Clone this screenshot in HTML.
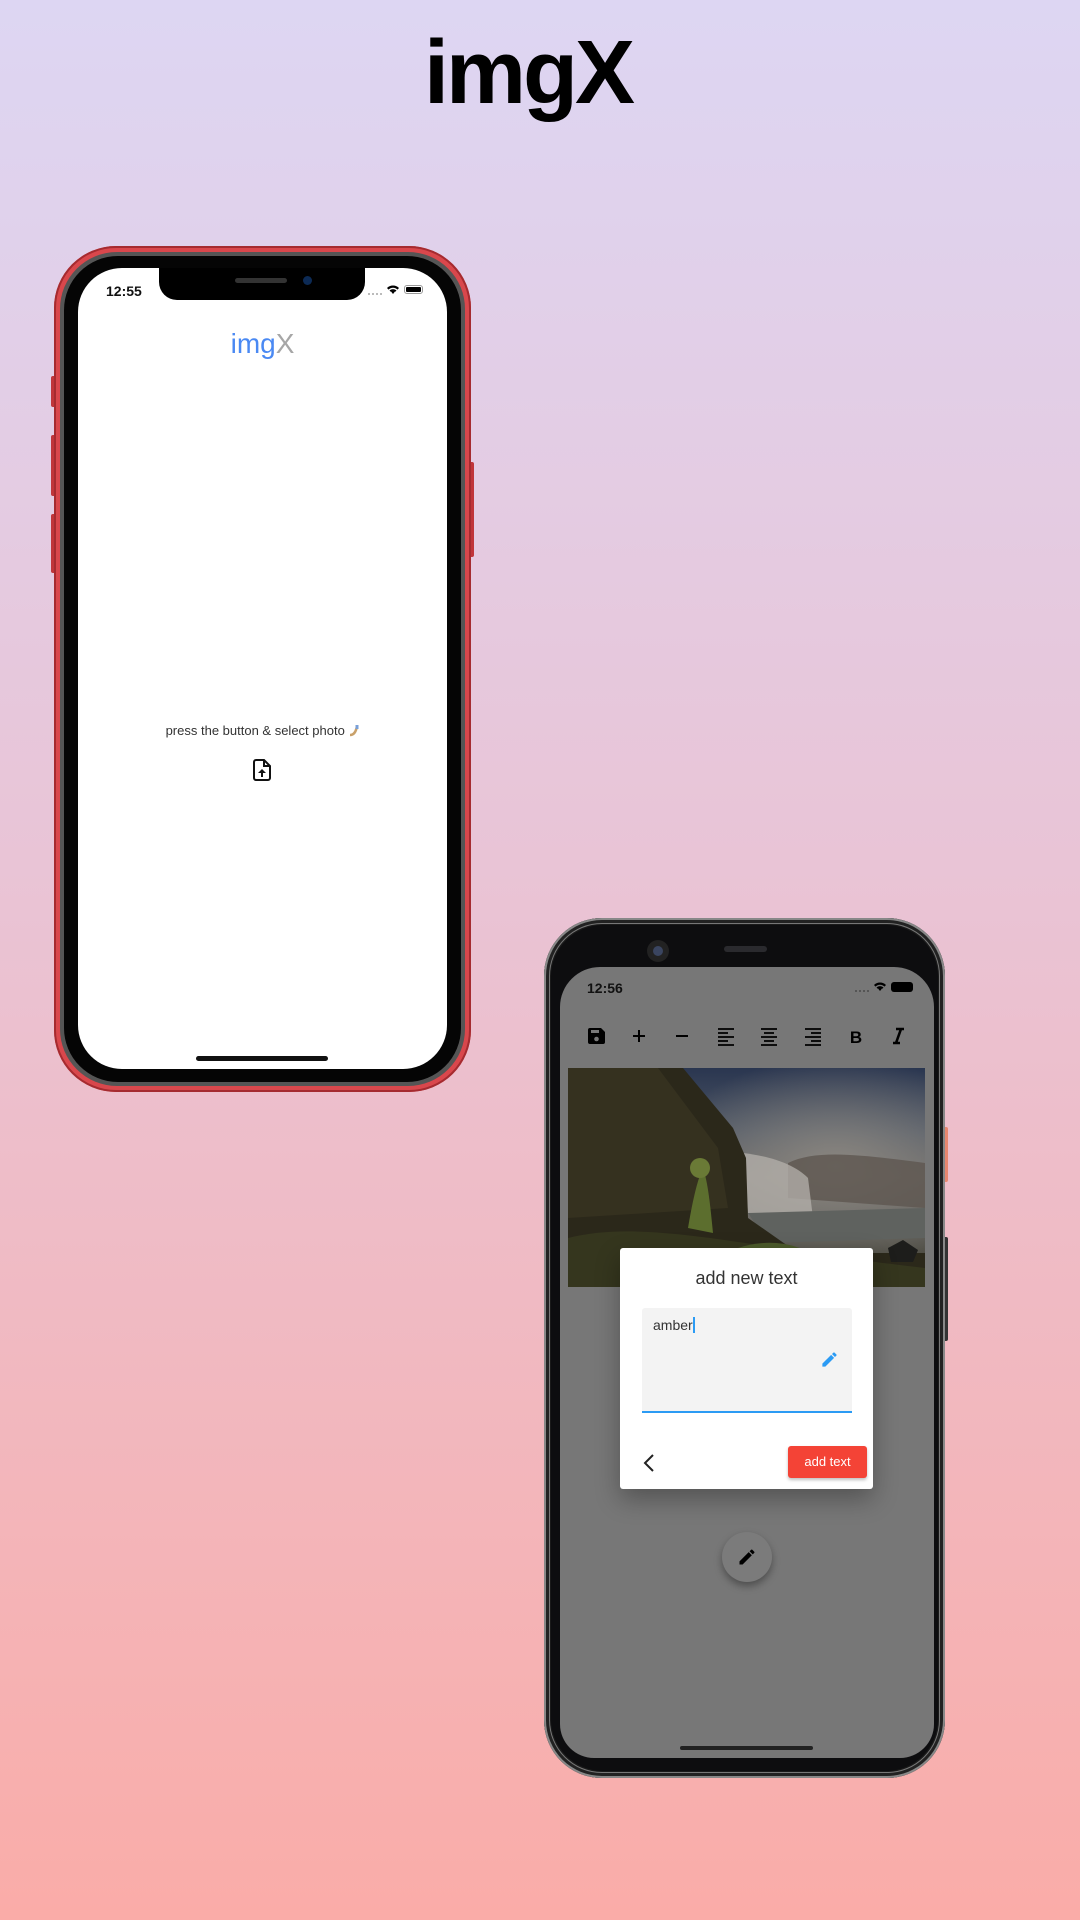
<!DOCTYPE html>
<html><head><meta charset="utf-8">
<style>
*{margin:0;padding:0;box-sizing:border-box}
body{width:1080px;height:1920px;overflow:hidden;background:linear-gradient(180deg,#ddd6f3 0%,#e9c4d6 45%,#faaca8 100%);font-family:"Liberation Sans","DejaVu Sans",sans-serif;position:relative}
.abs{position:absolute}
</style></head><body>
<div class="abs" style="left:-12px;width:1080px;top:22px;text-align:center;font-size:90px;font-weight:bold;letter-spacing:-3px;color:#000">imgX</div>

<!-- iPhone -->
<div class="abs" style="left:51px;top:376px;width:6px;height:31px;background:#c0353a;border-radius:2px"></div>
<div class="abs" style="left:51px;top:435px;width:6px;height:61px;background:#c0353a;border-radius:2px"></div>
<div class="abs" style="left:51px;top:514px;width:6px;height:59px;background:#c0353a;border-radius:2px"></div>
<div class="abs" style="left:468px;top:462px;width:6px;height:95px;background:#c0353a;border-radius:2px"></div>
<div class="abs" style="left:54px;top:246px;width:417px;height:846px;border-radius:62px;background:#d9474c;box-shadow:inset 0 0 0 2px #a52b30"></div>
<div class="abs" style="left:60px;top:252px;width:405px;height:834px;border-radius:57px;background:#555;"></div>
<div class="abs" style="left:64px;top:256px;width:397px;height:826px;border-radius:54px;background:#050505;"></div>
<div class="abs" style="left:78px;top:268px;width:369px;height:801px;border-radius:44px;background:#fff;overflow:hidden">
  <div class="abs" style="left:81px;top:-2px;width:206px;height:34px;background:#000;border-radius:0 0 18px 18px"></div>
  <div class="abs" style="left:157px;top:10px;width:52px;height:5px;background:#333;border-radius:3px"></div>
  <div class="abs" style="left:225px;top:8px;width:9px;height:9px;background:#0c2a55;border-radius:50%"></div>
  <div class="abs" style="left:28px;top:15px;font-size:14px;font-weight:bold;color:#111">12:55</div>
  <div class="abs" style="left:290px;top:25px;width:14px;height:2px;border-top:2px dotted #bbb"></div>
  <svg class="abs" style="left:308px;top:16px" width="14" height="11" viewBox="0 0 14 11"><path d="M7 10 L9 7.5 A3 3 0 0 0 5 7.5Z M1 4 A8.5 8.5 0 0 1 13 4 L11.5 5.6 A6.3 6.3 0 0 0 2.5 5.6Z M3.5 6.5 A5 5 0 0 1 10.5 6.5 L9.3 7.7 A3.3 3.3 0 0 0 4.7 7.7Z" fill="#000"/></svg>
  <div class="abs" style="left:326px;top:17px;width:19px;height:9px;border:1px solid #999;border-radius:3px;padding:1px"><div style="width:100%;height:100%;background:#000;border-radius:1px"></div></div>
  <div class="abs" style="left:0;width:369px;top:60px;text-align:center;font-size:28px;color:#4a89f3">img<span style="color:#a6a6a6">X</span></div>
  <div class="abs" style="left:0;width:369px;top:455px;text-align:center;font-size:13px;color:#333">press the button &amp; select photo <svg width="11" height="13" viewBox="0 0 11 13" style="vertical-align:-2px"><path d="M2 11 C6 11 8 8 9 2" stroke="#c9a16a" stroke-width="2.5" fill="none"/><rect x="7.5" y="1" width="3" height="4" fill="#7aa0d8"/></svg></div>
  <svg class="abs" style="left:172px;top:490px" width="24" height="24" viewBox="0 0 24 24"><path d="M6 2h8l6 6v12a2 2 0 0 1-2 2H6a2 2 0 0 1-2-2V4a2 2 0 0 1 2-2z" fill="none" stroke="#111" stroke-width="2"/><path d="M14 2v6h6" fill="none" stroke="#111" stroke-width="2"/><path d="M12 11l-4 4h3v4h2v-4h3z" fill="#111"/></svg>
  <div class="abs" style="left:118px;top:788px;width:132px;height:5px;background:#111;border-radius:3px"></div>
</div>

<!-- Android -->
<div class="abs" style="left:942px;top:1127px;width:6px;height:55px;background:#e8876f;border-radius:2px"></div>
<div class="abs" style="left:942px;top:1237px;width:6px;height:104px;background:#333;border-radius:2px"></div>
<div class="abs" style="left:544px;top:918px;width:401px;height:860px;border-radius:58px;background:#1a1a1a;box-shadow:inset 0 0 0 2px #888,inset 0 0 0 5px #222,inset 0 0 0 6px #777"></div>
<div class="abs" style="left:551px;top:925px;width:387px;height:846px;border-radius:52px;background:#0d0d0f"></div>
<div class="abs" style="left:647px;top:940px;width:22px;height:22px;border-radius:50%;background:#222"></div>
<div class="abs" style="left:653px;top:946px;width:10px;height:10px;border-radius:50%;background:#3a4560"></div>
<div class="abs" style="left:724px;top:946px;width:43px;height:6px;border-radius:3px;background:#2a2a2e"></div>
<div class="abs" style="left:560px;top:967px;width:374px;height:791px;border-radius:40px 40px 34px 34px;background:#777;overflow:hidden">
  <div class="abs" style="left:27px;top:13px;font-size:14px;font-weight:bold;color:#111">12:56</div>
  <div class="abs" style="left:295px;top:23px;width:14px;height:2px;border-top:2px dotted #555"></div>
  <svg class="abs" style="left:313px;top:14px" width="14" height="11" viewBox="0 0 14 11"><path d="M7 10 L9 7.5 A3 3 0 0 0 5 7.5Z M1 4 A8.5 8.5 0 0 1 13 4 L11.5 5.6 A6.3 6.3 0 0 0 2.5 5.6Z M3.5 6.5 A5 5 0 0 1 10.5 6.5 L9.3 7.7 A3.3 3.3 0 0 0 4.7 7.7Z" fill="#000"/></svg>
  <div class="abs" style="left:331px;top:15px;width:22px;height:10px;background:#000;border-radius:3px"></div>
  <!-- toolbar -->
  <svg class="abs" style="left:0;top:56px" width="374" height="24" viewBox="0 0 374 24" fill="#000">
    <path d="M30 5h11l4 4v10a2 2 0 0 1-2 2H30a2 2 0 0 1-2-2V7a2 2 0 0 1 2-2z"/><rect x="31" y="7" width="8" height="3" fill="#777"/><circle cx="36.5" cy="16" r="2.3" fill="#777"/>
    <path d="M73 13h12M79 7v12" stroke="#000" stroke-width="2"/>
    <path d="M116 13h12" stroke="#000" stroke-width="2"/>
    <path d="M158 6h16M158 10h10M158 14h16M158 18h10M158 22h16" stroke="#000" stroke-width="1.8"/>
    <path d="M201 6h16M204 10h10M201 14h16M204 18h10M201 22h16" stroke="#000" stroke-width="1.8"/>
    <path d="M245 6h16M251 10h10M245 14h16M251 18h10M245 22h16" stroke="#000" stroke-width="1.8"/>
    <text x="296" y="20" font-size="17" font-weight="bold" text-anchor="middle" font-family="Liberation Sans">B</text>
    <path d="M336 6h8M333 20h7M341 6l-5 14" stroke="#000" stroke-width="2.6"/>
  </svg>
  <!-- image -->
  <div class="abs" style="left:8px;top:101px;width:357px;height:219px;overflow:hidden;background:linear-gradient(180deg,#2a3650 0%,#4f5866 30%,#6d6a66 50%,#5c5b58 70%,#3a3828 100%)">
    <svg width="357" height="219" viewBox="0 0 357 219">
      <defs><radialGradient id="m" cx="0.75" cy="0.45" r="0.5"><stop offset="0" stop-color="#8a8680"/><stop offset="1" stop-color="#8a8680" stop-opacity="0"/></radialGradient></defs>
      <rect width="357" height="219" fill="url(#m)"/>
      <path d="M220 95 C250 80 300 88 357 95 L357 140 L220 130Z" fill="#5e5650" opacity="0.8"/>
      <path d="M175 85 C200 88 225 95 240 110 L245 150 L180 145 Z" fill="#b5b2ac" opacity="0.75"/>
      <path d="M180 145 L357 140 L357 170 L200 175Z" fill="#5f625f"/>
      <path d="M0 0 L115 0 L140 30 L165 60 L178 90 L180 150 L230 185 L357 185 L357 219 L0 219 Z" fill="#2b281a"/>
      <path d="M0 0 L90 0 L120 40 L150 80 L160 140 L0 150Z" fill="#3b3522" opacity="0.7"/>
      <path d="M0 170 C80 150 180 180 357 200 L357 219 L0 219Z" fill="#35361e"/>
      <path d="M120 160 C125 130 130 110 135 100 C140 115 142 135 145 165Z" fill="#5c6e2e"/>
      <circle cx="132" cy="100" r="10" fill="#6a7a36"/>
      <path d="M170 180 C200 170 230 175 250 190 L230 200 L180 195Z" fill="#4b5a2a"/>
      <path d="M320 180 l15 -8 l15 10 l-5 12 l-22 0z" fill="#1d1d1b"/>
    </svg>
  </div>
  <!-- FAB -->
  <div class="abs" style="left:162px;top:565px;width:50px;height:50px;border-radius:50%;background:#7b7b7b;box-shadow:0 4px 8px rgba(0,0,0,.35)"></div>
  <svg class="abs" style="left:177px;top:580px" width="20" height="20" viewBox="0 0 24 24"><path d="M3 17.25V21h3.75L17.81 9.94l-3.75-3.75L3 17.25zM20.71 7.04a1 1 0 0 0 0-1.41l-2.34-2.34a1 1 0 0 0-1.41 0l-1.830 1.83 3.75 3.75 1.83-1.83z" fill="#000"/></svg>
  <div class="abs" style="left:120px;top:779px;width:133px;height:4px;background:#222;border-radius:2px"></div>
</div>
<!-- dialog -->
<div class="abs" style="left:620px;top:1248px;width:253px;height:241px;background:#fff;border-radius:3px;box-shadow:0 10px 25px rgba(0,0,0,.3)">
  <div class="abs" style="left:0;width:253px;top:20px;text-align:center;font-size:18px;color:#333">add new text</div>
  <div class="abs" style="left:22px;top:60px;width:210px;height:105px;background:#f3f3f3;border-radius:3px 3px 0 0;border-bottom:2px solid #2b9bf4">
    <div class="abs" style="left:11px;top:9px;font-size:14px;color:#333">amber<span style="display:inline-block;width:2px;height:16px;background:#2b9bf4;vertical-align:-3px"></span></div>
    <svg class="abs" style="left:178px;top:42px" width="19" height="19" viewBox="0 0 24 24"><path d="M3 17.25V21h3.75L17.81 9.94l-3.75-3.75L3 17.25zM20.71 7.04a1 1 0 0 0 0-1.41l-2.34-2.34a1 1 0 0 0-1.41 0l-1.83 1.83 3.75 3.75 1.83-1.83z" fill="#2b9bf4"/></svg>
  </div>
  <svg class="abs" style="left:22px;top:205px" width="14" height="20" viewBox="0 0 14 20"><path d="M11 2L3 10l8 8" fill="none" stroke="#222" stroke-width="2"/></svg>
  <div class="abs" style="left:168px;top:198px;width:79px;height:32px;background:#f44336;border-radius:3px;box-shadow:0 2px 3px rgba(0,0,0,.25);color:#fff;font-size:13px;text-align:center;line-height:32px">add text</div>
</div>
</body></html>
